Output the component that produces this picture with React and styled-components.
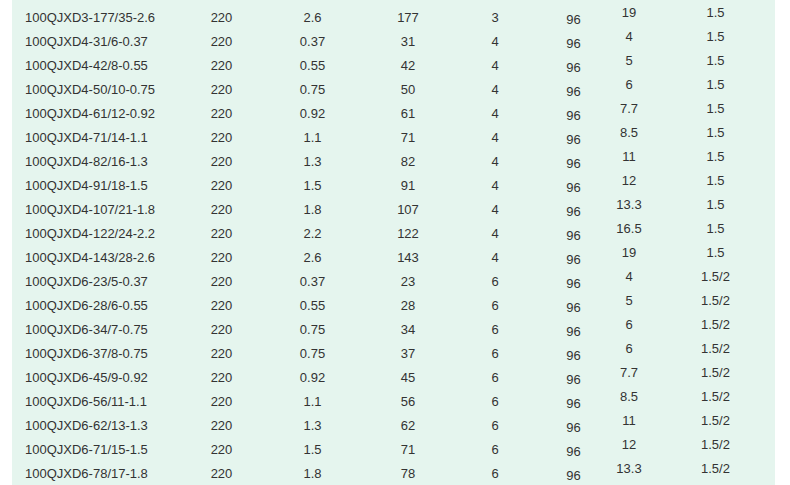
import styled, { createGlobalStyle } from 'styled-components'

const rows = [
   ['100QJXD3-177/35-2.6', '220', '2.6', '177', '3', '96', '19', '1.5'],
   ['100QJXD4-31/6-0.37', '220', '0.37', '31', '4', '96', '4', '1.5'],
   ['100QJXD4-42/8-0.55', '220', '0.55', '42', '4', '96', '5', '1.5'],
   ['100QJXD4-50/10-0.75', '220', '0.75', '50', '4', '96', '6', '1.5'],
   ['100QJXD4-61/12-0.92', '220', '0.92', '61', '4', '96', '7.7', '1.5'],
   ['100QJXD4-71/14-1.1', '220', '1.1', '71', '4', '96', '8.5', '1.5'],
   ['100QJXD4-82/16-1.3', '220', '1.3', '82', '4', '96', '11', '1.5'],
   ['100QJXD4-91/18-1.5', '220', '1.5', '91', '4', '96', '12', '1.5'],
   ['100QJXD4-107/21-1.8', '220', '1.8', '107', '4', '96', '13.3', '1.5'],
   ['100QJXD4-122/24-2.2', '220', '2.2', '122', '4', '96', '16.5', '1.5'],
   ['100QJXD4-143/28-2.6', '220', '2.6', '143', '4', '96', '19', '1.5'],
   ['100QJXD6-23/5-0.37', '220', '0.37', '23', '6', '96', '4', '1.5/2'],
   ['100QJXD6-28/6-0.55', '220', '0.55', '28', '6', '96', '5', '1.5/2'],
   ['100QJXD6-34/7-0.75', '220', '0.75', '34', '6', '96', '6', '1.5/2'],
   ['100QJXD6-37/8-0.75', '220', '0.75', '37', '6', '96', '6', '1.5/2'],
   ['100QJXD6-45/9-0.92', '220', '0.92', '45', '6', '96', '7.7', '1.5/2'],
   ['100QJXD6-56/11-1.1', '220', '1.1', '56', '6', '96', '8.5', '1.5/2'],
   ['100QJXD6-62/13-1.3', '220', '1.3', '62', '6', '96', '11', '1.5/2'],
   ['100QJXD6-71/15-1.5', '220', '1.5', '71', '6', '96', '12', '1.5/2'],
   ['100QJXD6-78/17-1.8', '220', '1.8', '78', '6', '96', '13.3', '1.5/2'],
]

// vertical nudge of each column, as the cells sit a little off in the source
const shifts = [0, 0, 0, 0, 0, 2, -5, -5.5]

const App = () => {
   return (
      <>
         <GlobalStyle />
         <Sheet>
            {rows.map((row) => (
               <Row key={row[0]}>
                  {row.map((value, i) => (
                     <Cell key={i} $first={i === 0} $shift={shifts[i]}>
                        {value}
                     </Cell>
                  ))}
               </Row>
            ))}
         </Sheet>
      </>
   )
}

const GlobalStyle = createGlobalStyle`
   html, body {
      margin: 0;
      padding: 0;
      background: #ffffff;
      overflow: hidden;
   }
`

const Sheet = styled.div`
   margin-left: 12px;
   width: 763px;
   height: 485px;
   padding-top: 6px;
   box-sizing: border-box;
   background-color: #e5f5ee;
   font-family: 'Liberation Sans', Arial, sans-serif;
   font-size: 13px;
   color: #333333;
   overflow: hidden;
`

const Row = styled.div`
   display: grid;
   grid-template-columns: 177px 65px 117px 74px 100px 57px 54px 119px;
   height: 24px;
`

const Cell = styled.div`
   line-height: 24px;
   white-space: nowrap;
   text-align: ${({ $first }) => ($first ? 'left' : 'center')};
   padding-left: ${({ $first }) => ($first ? '13px' : '0')};
   transform: translateY(${({ $shift }) => $shift}px);
`

export default App
